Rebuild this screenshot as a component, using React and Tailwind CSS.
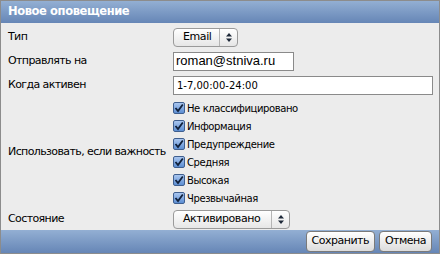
import React from 'react';

const levels = ['Не классифицировано', 'Информация', 'Предупреждение', 'Средняя', 'Высокая', 'Чрезвычайная'];

function Arrows() {
    return (
        <svg width="6" height="9" viewBox="0 0 6 9" className="text-gray-800">
            <path d="M3 0 L6 3.5 H0 Z M3 9 L6 5.5 H0 Z" fill="currentColor" />
        </svg>
    );
}

function Select({ value, width }) {
    return (
        <div className={`flex items-center h-[19px] rounded-[4px] border border-[#9a9a9a] bg-gradient-to-b from-white to-[#e6e6e6] shadow-[inset_0_1px_0_#fff] ${width}`}>
            <span className="flex-1 pl-[9px] text-[11px] tracking-[-0.4px] text-black whitespace-nowrap">{value}</span>
            <span className="h-full w-[1px] bg-[#b5b5b5]" />
            <span className="w-[17px] flex items-center justify-center"><Arrows /></span>
        </div>
    );
}

function Check({ label }) {
    return (
        <div className="flex items-center h-[18px]">
            <span className="w-[12px] h-[12px] rounded-[2px] border border-[#3f5f8f] bg-gradient-to-b from-[#a9c6ef] to-[#5d8fd3] flex items-center justify-center">
                <svg width="10" height="10" viewBox="0 0 10 10">
                    <path d="M1.5 5 L4 8 L8.8 1.5" stroke="#10203a" strokeWidth="1.8" fill="none" />
                </svg>
            </span>
            <span className="ml-[2px] text-[10px] tracking-[-0.4px] text-black">{label}</span>
        </div>
    );
}

export default function App() {
    return (
        <div className="w-[442px] h-[256px] bg-white font-['DejaVu_Sans',sans-serif]">
            <div className="w-[440px] h-[254px] border border-[#8c8c8c] flex flex-col">
                <div className="h-[24px] bg-gradient-to-b from-[#93afd3] to-[#6686b6] flex items-center pl-[7px]">
                    <span className="text-white font-bold text-[11.5px] tracking-[-0.4px]">Новое оповещение</span>
                </div>
                <div className="flex-1 bg-[#ececec] pl-[7px] pr-[6px] pt-[2px] text-[11px] tracking-[-0.6px] text-black">
                    <div className="grid grid-cols-[165px_1fr] items-center">
                        <div className="h-[24px] flex items-center">Тип</div>
                        <div><Select value="Email" width="w-[65px]" /></div>

                        <div className="h-[24px] flex items-center">Отправлять на</div>
                        <div>
                            <div className="w-[121px] h-[19px] border border-[#8a8a8a] bg-white flex items-center pl-[2px] text-[13px] tracking-normal font-['Liberation_Sans',sans-serif]">roman@stniva.ru</div>
                        </div>

                        <div className="h-[24px] flex items-center">Когда активен</div>
                        <div>
                            <div className="w-[260px] h-[19px] border border-[#8a8a8a] bg-white flex items-center pl-[3px] text-[10px] tracking-normal">1-7,00:00-24:00</div>
                        </div>

                        <div className="flex items-center whitespace-nowrap">Использовать, если важность</div>
                        <div className="pt-[2px] pb-[1px]">
                            {levels.map(l => <Check key={l} label={l} />)}
                        </div>

                        <div className="h-[22px] flex items-center">Состояние</div>
                        <div><Select value="Активировано" width="w-[117px]" /></div>
                    </div>
                </div>
                <div className="h-[25px] bg-gradient-to-b from-[#93afd3] to-[#6686b6] flex items-center justify-end gap-[4px] pr-[7px]">
                    <button className="h-[21px] px-[5px] rounded-[4px] border border-[#7a7a7a] bg-gradient-to-b from-white to-[#dcdcdc] text-[11px] tracking-[-0.5px] text-black">Сохранить</button>
                    <button className="h-[21px] px-[5px] rounded-[4px] border border-[#7a7a7a] bg-gradient-to-b from-white to-[#dcdcdc] text-[11px] tracking-[-0.5px] text-black">Отмена</button>
                </div>
            </div>
        </div>
    );
}
